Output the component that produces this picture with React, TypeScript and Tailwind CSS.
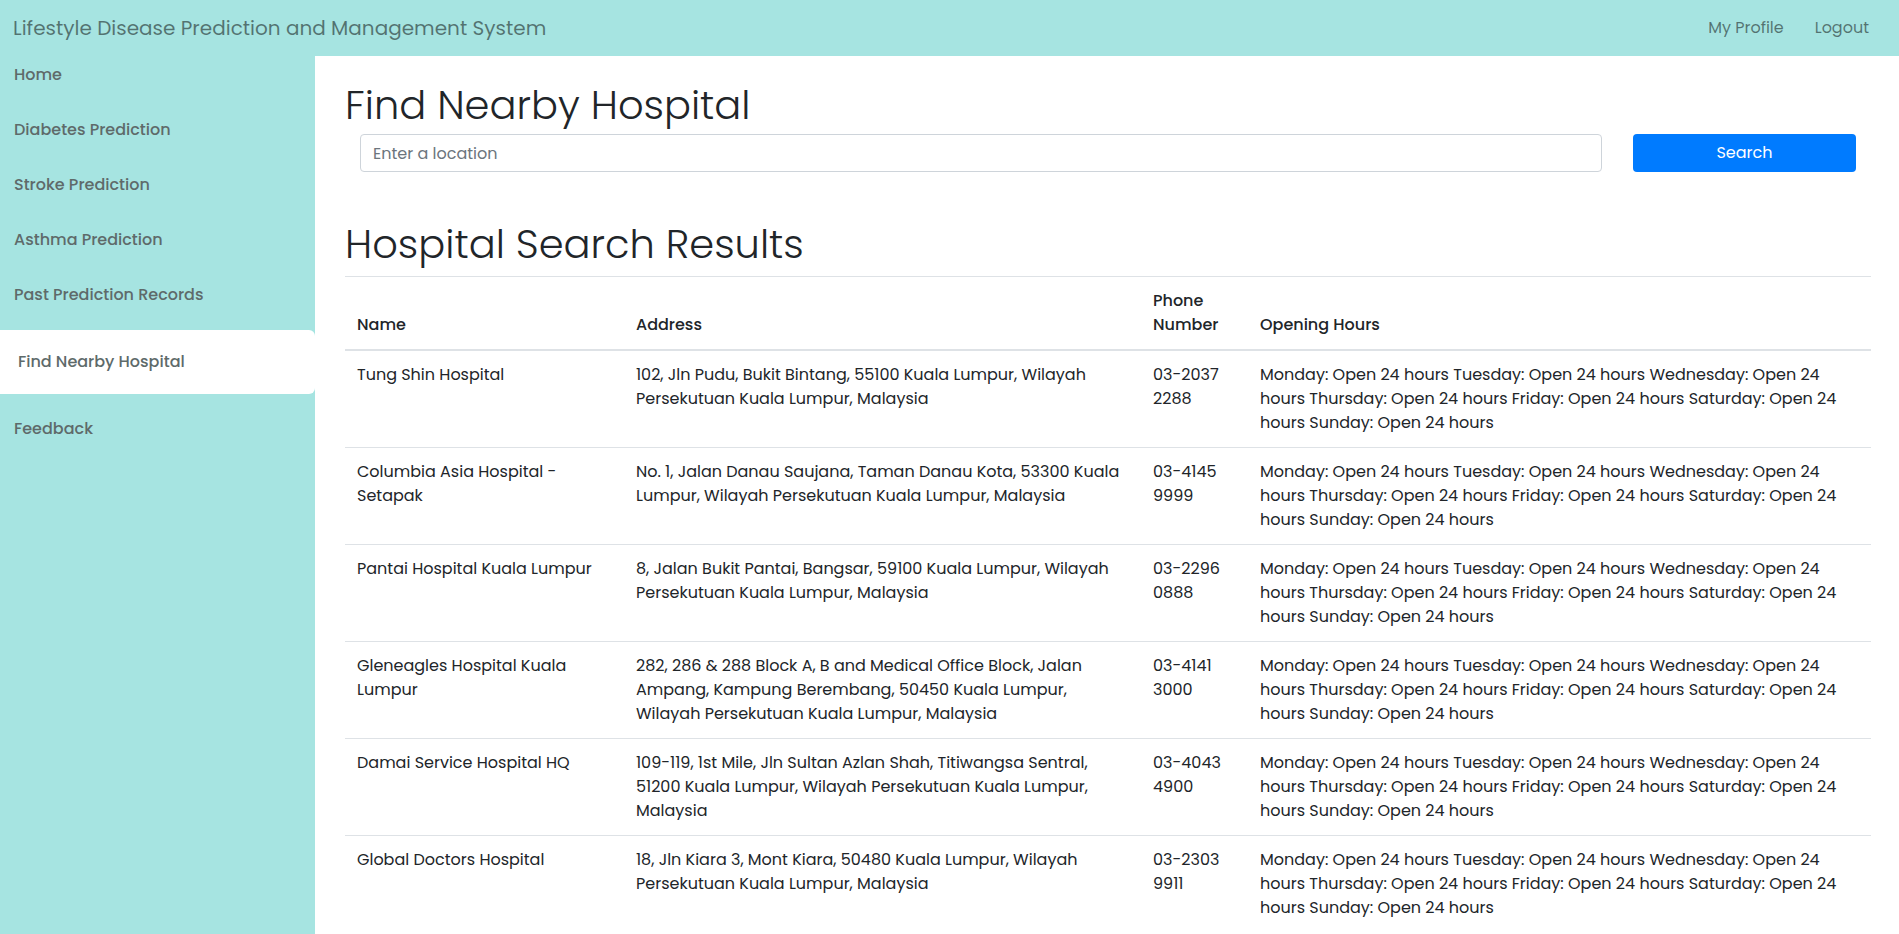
import React from "react";

const HOURS =
  "Monday: Open 24 hours Tuesday: Open 24 hours Wednesday: Open 24 hours Thursday: Open 24 hours Friday: Open 24 hours Saturday: Open 24 hours Sunday: Open 24 hours";

const rows = [
  {
    name: "Tung Shin Hospital",
    address: "102, Jln Pudu, Bukit Bintang, 55100 Kuala Lumpur, Wilayah Persekutuan Kuala Lumpur, Malaysia",
    phone: "03-2037 2288",
  },
  {
    name: "Columbia Asia Hospital - Setapak",
    address: "No. 1, Jalan Danau Saujana, Taman Danau Kota, 53300 Kuala Lumpur, Wilayah Persekutuan Kuala Lumpur, Malaysia",
    phone: "03-4145 9999",
  },
  {
    name: "Pantai Hospital Kuala Lumpur",
    address: "8, Jalan Bukit Pantai, Bangsar, 59100 Kuala Lumpur, Wilayah Persekutuan Kuala Lumpur, Malaysia",
    phone: "03-2296 0888",
  },
  {
    name: "Gleneagles Hospital Kuala Lumpur",
    address:
      "282, 286 & 288 Block A, B and Medical Office Block, Jalan Ampang, Kampung Berembang, 50450 Kuala Lumpur, Wilayah Persekutuan Kuala Lumpur, Malaysia",
    phone: "03-4141 3000",
  },
  {
    name: "Damai Service Hospital HQ",
    address:
      "109-119, 1st Mile, Jln Sultan Azlan Shah, Titiwangsa Sentral, 51200 Kuala Lumpur, Wilayah Persekutuan Kuala Lumpur, Malaysia",
    phone: "03-4043 4900",
  },
  {
    name: "Global Doctors Hospital",
    address: "18, Jln Kiara 3, Mont Kiara, 50480 Kuala Lumpur, Wilayah Persekutuan Kuala Lumpur, Malaysia",
    phone: "03-2303 9911",
  },
];

const navItems = [
  "Home",
  "Diabetes Prediction",
  "Stroke Prediction",
  "Asthma Prediction",
  "Past Prediction Records",
];

export default function App() {
  return (
    <div
      className="min-h-screen bg-white text-[#212529]"
      style={{ fontFamily: "Poppins, 'Open Sans', 'Noto Sans', sans-serif" }}
    >
      <header className="h-[56px] bg-[#a6e4e1] flex items-center justify-between pl-[13px] pr-[30px]">
        <div className="text-[20px] text-black/50 font-normal">
          Lifestyle Disease Prediction and Management System
        </div>
        <nav className="flex items-center gap-[31px] text-[16px] text-black/50">
          <span>My Profile</span>
          <span>Logout</span>
        </nav>
      </header>
      <div className="flex min-h-[878px]">
        <aside className="w-[315px] shrink-0 bg-[#a6e4e1] pt-[7px]">
          {navItems.map((n) => (
            <div
              key={n}
              className="h-[55px] pl-[14px] text-[16px] font-medium leading-6 text-[#5e6a6a]"
            >
              {n}
            </div>
          ))}
          <div className="-mt-[8px] h-[64px] flex items-center pl-[18px] bg-white rounded-r-[6px] text-[16px] font-medium text-[#5e6a6a]">
            Find Nearby Hospital
          </div>
          <div className="pt-[23px] pl-[14px] text-[16px] font-medium leading-6 text-[#5e6a6a]">
            Feedback
          </div>
        </aside>
        <main className="flex-1 pl-[30px] pr-[28px] pt-[25px]">
          <h1 className="text-[40px] font-light leading-[48px] mb-[5px]">Find Nearby Hospital</h1>
          <div className="flex items-center gap-[31px] px-[15px]">
            <input
              className="flex-1 h-[38px] border border-[#ced4da] rounded-[4px] px-[12px] text-[16px] placeholder:text-[#6c757d] outline-none"
              placeholder="Enter a location"
            />
            <button className="w-[223px] h-[38px] bg-[#007bff] text-white rounded-[4px] text-[16px]">
              Search
            </button>
          </div>
          <h2 className="mt-[48px] mb-[8px] text-[40px] font-light leading-[48px]">Hospital Search Results</h2>
          <table className="w-full border-collapse text-[16px] leading-6 table-fixed">
            <colgroup>
              <col className="w-[279px]" />
              <col className="w-[517px]" />
              <col className="w-[107px]" />
              <col />
            </colgroup>
            <thead>
              <tr>
                {["Name", "Address", "Phone Number", "Opening Hours"].map((h) => (
                  <th
                    key={h}
                    className="text-left align-bottom font-medium px-[12px] py-[12px] border-t border-[#dee2e6] border-b-2"
                  >
                    {h}
                  </th>
                ))}
              </tr>
            </thead>
            <tbody>
              {rows.map((r) => (
                <tr key={r.name}>
                  <td className="align-top px-[12px] py-[12px] border-t border-[#dee2e6]">{r.name}</td>
                  <td className="align-top px-[12px] py-[12px] border-t border-[#dee2e6]">{r.address}</td>
                  <td className="align-top px-[12px] py-[12px] border-t border-[#dee2e6]">{r.phone}</td>
                  <td className="align-top px-[12px] py-[12px] border-t border-[#dee2e6]">{HOURS}</td>
                </tr>
              ))}
            </tbody>
          </table>
        </main>
      </div>
    </div>
  );
}
